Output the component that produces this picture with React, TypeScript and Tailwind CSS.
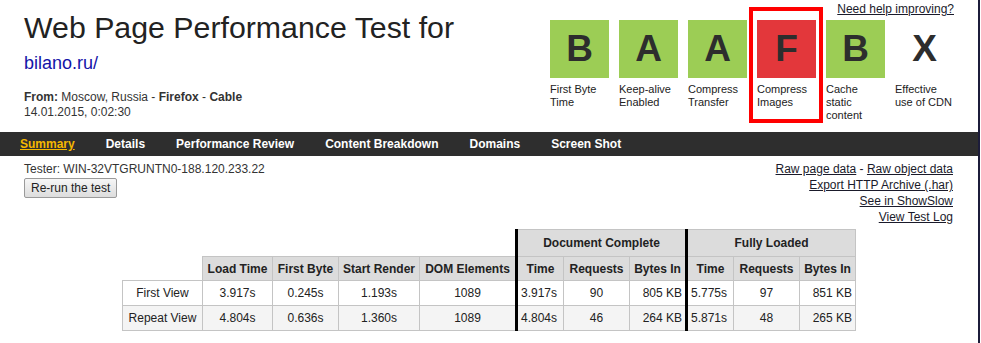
import React from 'react'

type Grade = { letter: string; label: string; bg: string; flagged?: boolean }

const grades: Grade[] = [
  { letter: 'B', label: 'First Byte Time', bg: 'bg-[#9ccd55]' },
  { letter: 'A', label: 'Keep-alive Enabled', bg: 'bg-[#9ccd55]' },
  { letter: 'A', label: 'Compress Transfer', bg: 'bg-[#9ccd55]' },
  { letter: 'F', label: 'Compress Images', bg: 'bg-[#e3373b]', flagged: true },
  { letter: 'B', label: 'Cache static content', bg: 'bg-[#9ccd55]' },
  { letter: 'X', label: 'Effective use of CDN', bg: 'bg-transparent' },
]

const tabs = ['Summary', 'Details', 'Performance Review', 'Content Breakdown', 'Domains', 'Screen Shot']

const rows = [
  { view: 'First View', load: '3.917s', fb: '0.245s', sr: '1.193s', dom: '1089', dTime: '3.917s', dReq: '90', dBytes: '805 KB', fTime: '5.775s', fReq: '97', fBytes: '851 KB', bg: 'bg-white' },
  { view: 'Repeat View', load: '4.804s', fb: '0.636s', sr: '1.360s', dom: '1089', dTime: '4.804s', dReq: '46', dBytes: '264 KB', fTime: '5.871s', fReq: '48', fBytes: '265 KB', bg: 'bg-[#f4f4f4]' },
]

function GradeBox({ grade }: { grade: Grade }) {
  return (
    <div className="relative w-[59px]">
      {grade.flagged && (
        <div className="absolute -left-[8px] -top-[13px] w-[74px] h-[116px] border-4 border-[#ff0000]" />
      )}
      <div className={`h-[58px] flex items-center justify-center text-[37px] font-bold text-[#2d2d2d] ${grade.bg}`}>
        {grade.letter}
      </div>
      <div className="mt-[5px] text-[11px] leading-[13px] text-[#222]">{grade.label}</div>
    </div>
  )
}

const th = 'border border-[#c4c4c4] bg-[#dcdcdc] font-bold text-center px-[2px] whitespace-nowrap'
const td = 'border border-[#c4c4c4] px-[3px] whitespace-nowrap'
const thick = 'border-l-[3px] border-l-black'

export default function App() {
  return (
    <div className="flex w-[981px] h-[343px] bg-white text-[#222] overflow-hidden" style={{ fontFamily: '"Liberation Sans", Arial, sans-serif' }}>
      <div className="w-[978px] flex flex-col">
        <header className="flex justify-between h-[132px] pl-[24px] pr-[24px]">
          <div className="pt-[11px]">
            <h1 className="text-[30.3px] leading-[34px] text-[#222] font-normal">Web Page Performance Test for</h1>
            <a className="block mt-[8px] text-[18px] leading-[20px] text-[#1313a8]">bilano.ru/</a>
            <div className="mt-[17px] text-[12px] leading-[15px] text-[#333]">
              <div>
                <b>From:</b> Moscow, Russia - <b>Firefox</b> - <b>Cable</b>
              </div>
              <div>14.01.2015, 0:02:30</div>
            </div>
          </div>
          <div className="flex flex-col items-end">
            <a className="mt-[2px] text-[12px] leading-[14px] underline text-[#1a1a2a]">Need help improving?</a>
            <div className="flex gap-[10px] mt-[4px]">
              {grades.map((g, i) => (
                <GradeBox key={i} grade={g} />
              ))}
            </div>
          </div>
        </header>

        <nav className="h-[24px] bg-[#2e2e2e] flex items-center gap-[31px] pl-[20px] text-[12px] font-bold">
          {tabs.map((t, i) => (
            <span key={t} className={i === 0 ? 'text-[#f5b800] underline' : 'text-white'}>
              {t}
            </span>
          ))}
        </nav>

        <section className="flex justify-between pl-[24px] pr-[25px] pt-[5px] text-[12px] leading-[16px]">
          <div className="text-[#333]">
            <div>Tester: WIN-32VTGRUNTN0-188.120.233.22</div>
            <button className="mt-[1px] h-[20px] px-[6px] border border-[#9a9a9a] rounded-[2px] bg-gradient-to-b from-[#f6f6f6] to-[#dddddd] text-[12px] text-[#222]">
              Re-run the test
            </button>
          </div>
          <div className="flex flex-col items-end text-[#1a1a2a]">
            <div>
              <a className="underline">Raw page data</a> - <a className="underline">Raw object data</a>
            </div>
            <a className="underline">Export HTTP Archive (.har)</a>
            <a className="underline">See in ShowSlow</a>
            <a className="underline">View Test Log</a>
          </div>
        </section>

        <table className="mx-auto mt-[4px] w-[733px] table-fixed border-collapse text-[12px] text-[#222]">
          <colgroup>
            <col className="w-[80px]" />
            <col className="w-[70px]" />
            <col className="w-[66px]" />
            <col className="w-[81px]" />
            <col className="w-[97px]" />
            <col className="w-[47px]" />
            <col className="w-[66px]" />
            <col className="w-[57px]" />
            <col className="w-[47px]" />
            <col className="w-[66px]" />
            <col className="w-[56px]" />
          </colgroup>
          <thead>
            <tr className="h-[27px]">
              <th colSpan={5} className="border-0" />
              <th colSpan={3} className={`${th} ${thick}`}>Document Complete</th>
              <th colSpan={3} className={`${th} ${thick}`}>Fully Loaded</th>
            </tr>
            <tr className="h-[24px]">
              <th className="border-0" />
              <th className={th}>Load Time</th>
              <th className={th}>First Byte</th>
              <th className={th}>Start Render</th>
              <th className={th}>DOM Elements</th>
              <th className={`${th} ${thick}`}>Time</th>
              <th className={th}>Requests</th>
              <th className={th}>Bytes In</th>
              <th className={`${th} ${thick}`}>Time</th>
              <th className={th}>Requests</th>
              <th className={th}>Bytes In</th>
            </tr>
          </thead>
          <tbody>
            {rows.map((r) => (
              <tr key={r.view} className={`h-[25px] ${r.bg}`}>
                <td className={`${td} text-center`}>{r.view}</td>
                <td className={`${td} text-center`}>{r.load}</td>
                <td className={`${td} text-center`}>{r.fb}</td>
                <td className={`${td} text-center`}>{r.sr}</td>
                <td className={`${td} text-center`}>{r.dom}</td>
                <td className={`${td} ${thick} text-left`}>{r.dTime}</td>
                <td className={`${td} text-center`}>{r.dReq}</td>
                <td className={`${td} text-right`}>{r.dBytes}</td>
                <td className={`${td} ${thick} text-left`}>{r.fTime}</td>
                <td className={`${td} text-center`}>{r.fReq}</td>
                <td className={`${td} text-right`}>{r.fBytes}</td>
              </tr>
            ))}
          </tbody>
        </table>
      </div>
      <div className="w-[2px] h-full bg-[#1c1c3a]" />
    </div>
  )
}
